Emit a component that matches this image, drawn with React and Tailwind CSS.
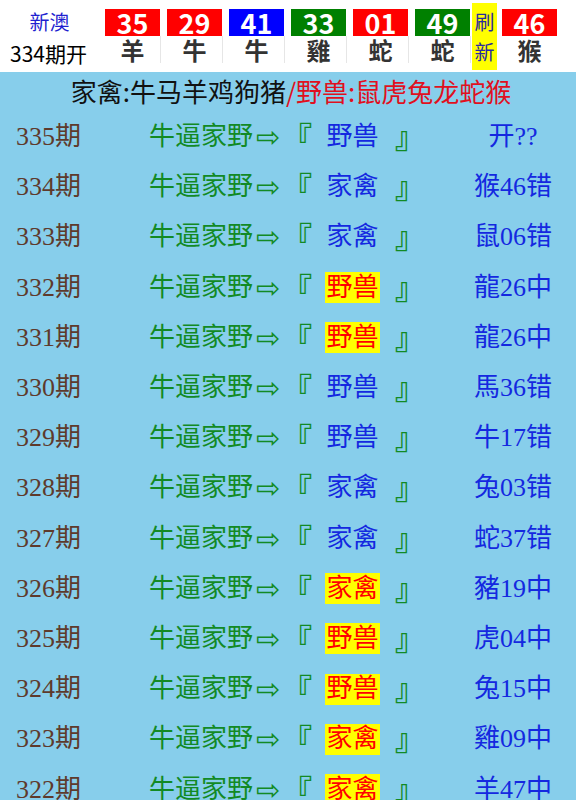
import React from "react";

const balls = [
  { n: "35", z: "羊", c: "bg-[#ff0000]" },
  { n: "29", z: "牛", c: "bg-[#ff0000]" },
  { n: "41", z: "牛", c: "bg-[#0000ff]" },
  { n: "33", z: "雞", c: "bg-[#008000]" },
  { n: "01", z: "蛇", c: "bg-[#ff0000]" },
  { n: "49", z: "蛇", c: "bg-[#008000]" },
];

const rows = [
  ["335", "野兽", false, "开??"],
  ["334", "家禽", false, "猴46错"],
  ["333", "家禽", false, "鼠06错"],
  ["332", "野兽", true, "龍26中"],
  ["331", "野兽", true, "龍26中"],
  ["330", "野兽", false, "馬36错"],
  ["329", "野兽", false, "牛17错"],
  ["328", "家禽", false, "兔03错"],
  ["327", "家禽", false, "蛇37错"],
  ["326", "家禽", true, "豬19中"],
  ["325", "野兽", true, "虎04中"],
  ["324", "野兽", true, "兔15中"],
  ["323", "家禽", true, "雞09中"],
  ["322", "家禽", true, "羊47中"],
];

const sans = { fontFamily: '"Noto Sans CJK SC", "Noto Sans", sans-serif' };
const serif = { fontFamily: '"Liberation Serif", "Noto Sans CJK SC", serif' };

export default function App() {
  return (
    <div className="w-[576px] h-[800px] overflow-hidden bg-[#87ceeb]" style={sans}>
      <div className="flex h-[72px] bg-white items-start">
        <div className="w-[99px] flex flex-col items-center pt-[5px]">
          <div className="text-[20px] leading-[34px] text-[#1f1fd0]">新澳</div>
          <div className="text-[21px] leading-[28px] text-black -ml-[2px]">334期开</div>
        </div>
        {balls.map((b, i) => (
          <div key={i} className="w-[62px] flex flex-col pt-[9px]">
            <div className={`ml-[6px] w-[55px] h-[27px] ${b.c} text-white font-bold text-[27px] leading-[27px] flex items-center justify-center`}>
              {b.n}
            </div>
            <div className="h-[27px] border-r border-[#e6e6e6] flex justify-center pl-[6px] text-[24px] leading-[27px] font-bold text-[#333333]">
              {b.z}
            </div>
          </div>
        ))}
        <div className="ml-[1px] mt-[3px] w-[25px] h-[67px] bg-[#ffff00] flex flex-col items-center justify-center text-[20px] leading-[30px] text-[#2a2aa0]">
          <span>刷</span>
          <span>新</span>
        </div>
        <div className="ml-[5px] flex flex-col pt-[9px]">
          <div className="w-[55px] h-[27px] bg-[#ff0000] text-white font-bold text-[27px] leading-[27px] flex items-center justify-center">
            46
          </div>
          <div className="h-[27px] flex justify-center text-[24px] leading-[27px] font-bold text-[#333333]">
            猴
          </div>
        </div>
      </div>
      <div className="h-[40px] flex items-center justify-center text-[26px] leading-[30px] pl-[6px] pb-[2px]">
        <span className="text-[#111111]">家禽:牛马羊鸡狗猪</span>
        <span className="text-[#e01020]">/野兽:鼠虎兔龙蛇猴</span>
      </div>
      <div style={serif}>
        {rows.map(([p, t, hl, r]) => (
          <div key={p} className="h-[50.2px] flex items-center text-[26px] leading-[32px]">
            <div className="w-[149px] pl-[16px] text-[#5e3a2c]">{p}期</div>
            <div className="w-[301px] flex items-center text-[#128a24]">
              <span className="w-[108px]">牛逼家野</span>
              <span className="w-[28px] text-[29px] leading-[32px] -ml-[1px]" style={{ fontFamily: '"DejaVu Sans", sans-serif' }}>⇨</span>
              <span className="w-[28px] -ml-[2px] font-bold text-[30px] leading-[32px] -translate-y-[2px]" style={sans}>『</span>
              <span className={`ml-[15px] w-[55px] h-[31px] flex items-center justify-center ${hl ? "bg-[#ffff00] text-[#ff0000]" : "text-[#1428e0]"}`}>
                {t}
              </span>
              <span className="ml-[15px] w-[28px] font-bold text-[30px] leading-[32px] -translate-y-[2px]" style={sans}>』</span>
            </div>
            <div className="flex-1 text-center text-[#1428e0]">{r}</div>
          </div>
        ))}
      </div>
    </div>
  );
}
